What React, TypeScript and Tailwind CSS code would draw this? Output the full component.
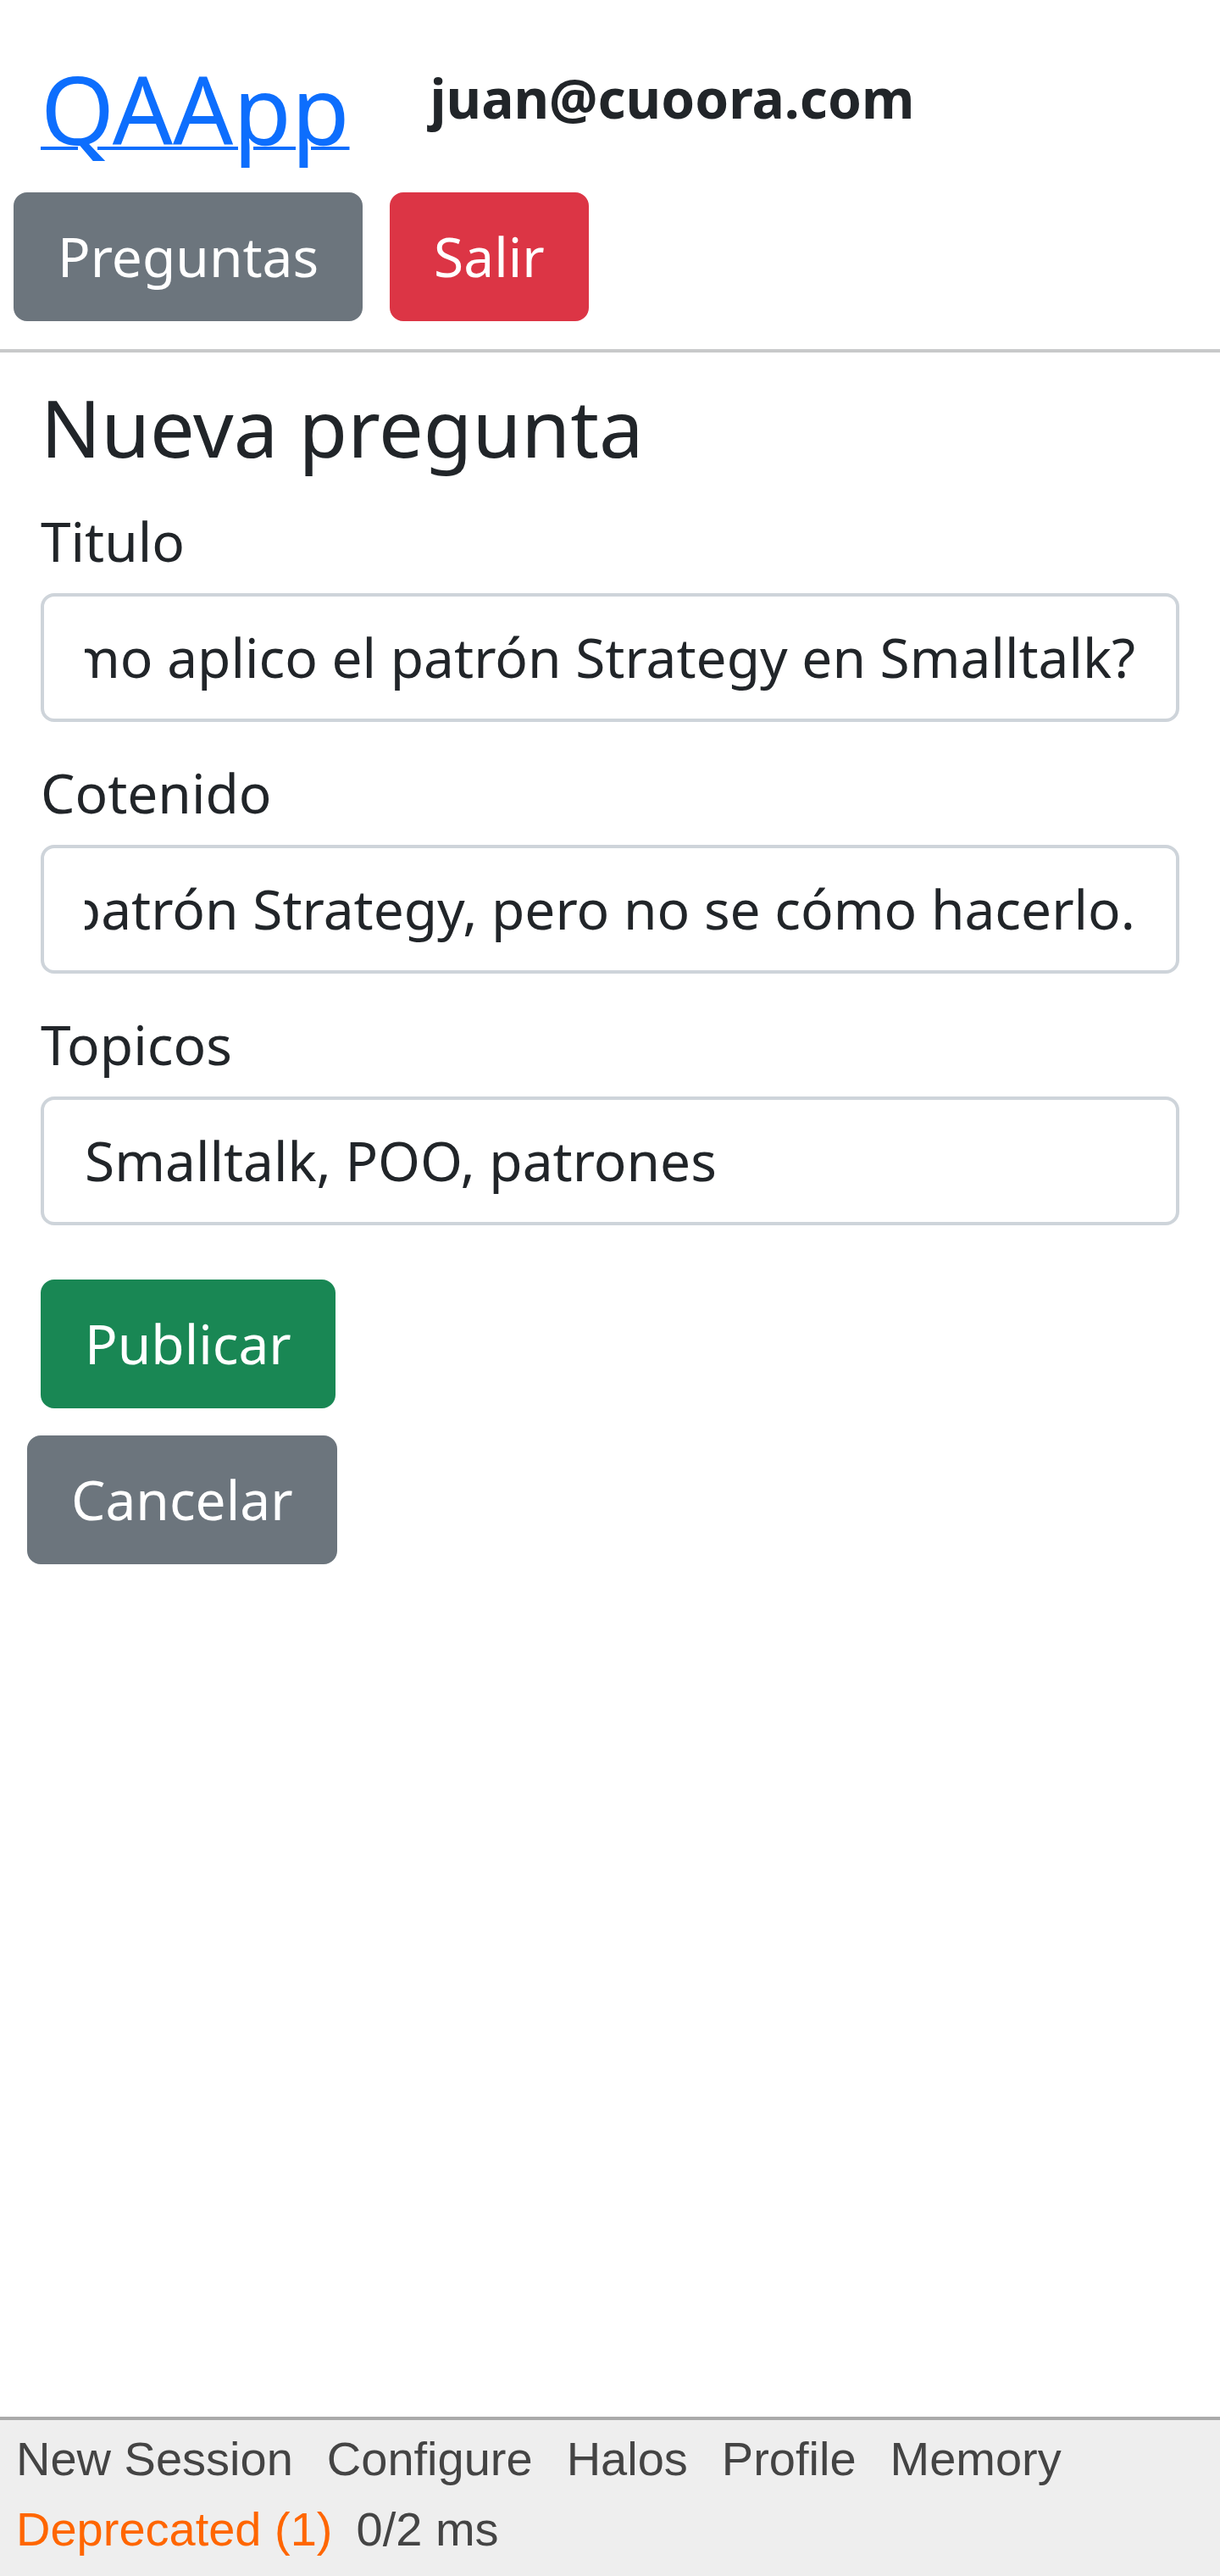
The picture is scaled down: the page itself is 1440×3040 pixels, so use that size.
import React from "react";

const fields = [
    {label: "Titulo", value: "¿Cómo aplico el patrón Strategy en Smalltalk?", scrolled: true},
    {label: "Cotenido", value: "Quiero usar el patrón Strategy, pero no se cómo hacerlo.", scrolled: true},
    {label: "Topicos", value: "Smalltalk, POO, patrones", scrolled: false},
];

const toolbar = ["New Session", "Configure", "Halos", "Profile", "Memory"];

function Field({label, value, scrolled}: { label: string; value: string; scrolled: boolean }) {
    return (
        <div className="mb-[36px]">
            <label className="block">{label}</label>
            <div className="mt-[13px] rounded-[16px] border-4 border-[#ced4da] bg-white px-[48px] py-[24px]">
                {/* the value is scrolled to its end, like a filled input */}
                <div className={"flex overflow-hidden whitespace-nowrap " + (scrolled ? "justify-end" : "justify-start")}>
                    <span className="shrink-0">{value}</span>
                </div>
            </div>
        </div>
    );
}

export default function App() {
    return (
        <div className="flex min-h-screen flex-col bg-white font-['Noto_Sans',sans-serif] text-[64px] leading-[96px] text-[#212529]">
            <header>
                <div className="flex items-start pl-[48px] pt-[63px]">
                    <h1 className="text-[111.5px] font-normal leading-[131.5px]">
                        <a href="#" className="text-[#0d6efd] underline decoration-[4px]">QAApp</a>
                    </h1>
                    <span className="ml-[95px] mt-[5px] font-bold">juan@cuoora.com</span>
                </div>
                <div className="mt-[32px] flex gap-[32px] pl-[16px]">
                    <button className="rounded-[16px] border-4 border-[#6c757d] bg-[#6c757d] px-[48px] py-[24px] text-white">
                        Preguntas
                    </button>
                    <button className="rounded-[16px] border-4 border-[#dc3545] bg-[#dc3545] px-[48px] py-[24px] text-white">
                        Salir
                    </button>
                </div>
            </header>
            <hr className="mt-[33px] border-0 border-t-4 border-[#c8c9ca]"/>
            <main className="px-[48px]">
                <h2 className="mb-[29px] mt-[29px] text-[93.7px] font-normal leading-[117.4px]">Nueva pregunta</h2>
                {fields.map((f) => (
                    <Field key={f.label} label={f.label} value={f.value} scrolled={f.scrolled}/>
                ))}
                <button className="mt-[28px] rounded-[16px] border-4 border-[#198754] bg-[#198754] px-[48px] py-[24px] text-white">
                    Publicar
                </button>
            </main>
            <div className="mt-[32px] pl-[32px]">
                <button className="rounded-[16px] border-4 border-[#6c757d] bg-[#6c757d] px-[48px] py-[24px] text-white">
                    Cancelar
                </button>
            </div>
            <footer className="mt-auto border-t-4 border-[#aaaaaa] bg-[#eeeeee] pb-[14px] pl-[19px] pt-[4px] font-['Liberation_Sans',Arial,sans-serif] text-[56px] leading-[83px] text-[#444444]">
                <ul className="flex flex-wrap gap-x-[40px]">
                    {toolbar.map((t) => (
                        <li key={t}><a href="#">{t}</a></li>
                    ))}
                    <li>
                        <a href="#" className="text-[#ff6600]">Deprecated (1)</a>
                        <span className="ml-[28px]">0/2 ms</span>
                    </li>
                </ul>
            </footer>
        </div>
    );
}
